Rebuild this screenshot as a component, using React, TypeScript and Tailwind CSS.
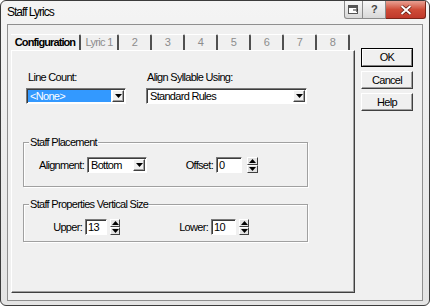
import type { ReactNode } from "react";

const tabs = [
    { label: "Configuration", w: "w-[70px]", active: true },
    { label: "Lyric 1", w: "w-[38px]" },
    { label: "2", w: "w-[33px]" },
    { label: "3", w: "w-[33px]" },
    { label: "4", w: "w-[33px]" },
    { label: "5", w: "w-[33px]" },
    { label: "6", w: "w-[33px]" },
    { label: "7", w: "w-[33px]" },
    { label: "8", w: "w-[33px]" },
];

function Arrow({ up = false }: { up?: boolean }) {
    return (
        <svg width="7" height="4" viewBox="0 0 7 4" className="block">
            <path d={up ? "M0 4 L7 4 L3.5 0 Z" : "M0 0 L7 0 L3.5 4 Z"} fill="#000" />
        </svg>
    );
}

function Combo({ value, className, selected = false }: { value: string; className: string; selected?: boolean }) {
    return (
        <div
            className={`flex h-[16px] border border-t-[#7a7a7a] border-l-[#7a7a7a] border-r-white border-b-white bg-white p-[1px] shadow-[inset_1px_1px_0_#3c3c3c] ${className}`}
        >
            <div
                className={`flex flex-1 items-center pl-[2px] text-[11px] leading-[12px] ${
                    selected ? "mr-[1px] bg-[#3399ff] text-white" : "text-black"
                }`}
            >
                {value}
            </div>
            <div className="flex w-[12px] items-center justify-center border border-t-white border-l-white border-r-[#404040] border-b-[#404040] bg-[#f0f0f0] shadow-[inset_-1px_-1px_0_#a0a0a0]">
                <Arrow />
            </div>
        </div>
    );
}

function Field({ value, className }: { value: string; className: string }) {
    return (
        <div
            className={`flex h-[16px] items-center border border-t-[#7a7a7a] border-l-[#7a7a7a] border-r-white border-b-white bg-white pl-[2px] text-[11px] leading-[12px] shadow-[inset_1px_1px_0_#3c3c3c] ${className}`}
        >
            {value}
        </div>
    );
}

function Spin({ className }: { className: string }) {
    return (
        <div className={`flex h-[16px] flex-col ${className}`}>
            <div className="flex flex-1 items-center justify-center border border-t-white border-l-white border-r-[#404040] border-b-[#404040] bg-[#e3e3e3]">
                <Arrow up />
            </div>
            <div className="flex flex-1 items-center justify-center border border-t-white border-l-white border-r-[#404040] border-b-[#404040] bg-[#e3e3e3]">
                <Arrow />
            </div>
        </div>
    );
}

function Group({ title, className, children }: { title: string; className: string; children: ReactNode }) {
    return (
        <fieldset
            className={`ml-[11px] w-[285px] border border-[#a0a0a0] shadow-[1px_1px_0_#fff,inset_1px_1px_0_#fff] ${className}`}
        >
            <legend className="ml-[5px] bg-[#f0f0f0] px-[1px] text-[11px] leading-[13px]">{title}</legend>
            {children}
        </fieldset>
    );
}

function Button({ label, isDefault = false }: { label: string; isDefault?: boolean }) {
    if (isDefault) {
        return (
            <div className="h-[19px] w-[52px] border border-black">
                <div className="flex h-full items-center justify-center border border-t-white border-l-white border-r-[#808080] border-b-[#808080] bg-[#f0f0f0] text-[11px]">
                    {label}
                </div>
            </div>
        );
    }
    return (
        <div className="flex h-[18px] w-[52px] items-center justify-center border border-t-white border-l-white border-r-[#404040] border-b-[#404040] bg-[#f0f0f0] text-[11px] shadow-[inset_-1px_-1px_0_#a0a0a0]">
            {label}
        </div>
    );
}

export default function App() {
    return (
        <div className="flex h-[306px] w-[430px] flex-col overflow-hidden rounded-[6px] border border-[#3c3c3c] bg-gradient-to-b from-[#f4f4f4] to-[#e4e4e4] font-['Liberation_Sans',Arial,sans-serif] tracking-[-0.7px] text-black">
            {/* title bar */}
            <div className="flex h-[22px] shrink-0 items-start">
                <div className="pl-[6px] pt-[4px] text-[12px] leading-[15px] tracking-[-1px]">Staff Lyrics</div>
                <div className="ml-auto mr-[3px] flex">
                    <div className="flex h-[18px] w-[19px] items-center justify-center rounded-bl-[3px] border border-t-0 border-[#8a8a8a] bg-gradient-to-b from-[#f7f7f7] to-[#d8d8d8]">
                        <svg width="11" height="9" viewBox="0 0 11 9">
                            <rect x="0.5" y="0.5" width="9" height="8" fill="#fff" stroke="#555" />
                            <rect x="1" y="1" width="8" height="2" fill="#555" />
                            <path d="M5 5 H10 M8 3.5 L10 5 L8 6.5" stroke="#333" fill="none" />
                        </svg>
                    </div>
                    <div className="flex h-[18px] w-[23px] items-center justify-center border border-t-0 border-l-0 border-[#8a8a8a] bg-gradient-to-b from-[#f7f7f7] to-[#d8d8d8] text-[11px] font-bold leading-none text-[#444]">
                        ?
                    </div>
                    <div className="flex h-[18px] w-[40px] items-center justify-center rounded-br-[3px] border border-t-0 border-l-0 border-[#7a2418] bg-gradient-to-b from-[#e8a093] via-[#cf4c38] to-[#c0392b]">
                        <svg width="12" height="10" viewBox="0 0 12 10">
                            <path d="M1.5 1 L10.5 9 M10.5 1 L1.5 9" stroke="#5a1a10" strokeWidth="3.4" />
                            <path d="M1.5 1 L10.5 9 M10.5 1 L1.5 9" stroke="#fff" strokeWidth="2" />
                        </svg>
                    </div>
                </div>
            </div>

            {/* client area */}
            <div className="mx-[6px] mt-[1px] flex h-[277px] shrink-0 border border-[#8f8f8f] bg-[#f0f0f0] text-[11px]">
                <div className="ml-[3px] mt-[9px] flex w-[344px] flex-col">
                    <div className="flex h-[16px] items-stretch">
                        {tabs.map((t) => (
                            <div
                                key={t.label}
                                className={`flex items-center justify-center rounded-tr-[2px] border-t border-t-white border-r-2 border-r-[#505050] ${t.w} ${
                                    t.active ? "font-bold tracking-[-0.9px] text-black" : "text-[#8c8c8c]"
                                }`}
                            >
                                {t.label}
                            </div>
                        ))}
                    </div>
                    <div className="flex h-[243px] flex-col border border-t-white border-l-white border-r-[#404040] border-b-[#404040] shadow-[inset_-1px_-1px_0_#a0a0a0]">
                        <div className="mt-[20px] flex h-[13px] items-center leading-[13px]">
                            <span className="ml-[16px] w-[119px]">Line Count:</span>
                            <span>Align Syllable Using:</span>
                        </div>
                        <div className="mt-[4px] flex pl-[14px]">
                            <Combo value="<None>" selected className="w-[100px]" />
                            <Combo value="Standard Rules" className="ml-[20px] w-[161px]" />
                        </div>

                        <Group title="Staff Placement" className="mt-[32px] h-[51px]">
                            <div className="mt-[8px] flex items-center">
                                <span className="w-[63px] pr-[3px] text-right">Alignment:</span>
                                <Combo value="Bottom" className="w-[60px]" />
                                <span className="w-[69px] pr-[3px] text-right">Offset:</span>
                                <Field value="0" className="w-[26px]" />
                                <Spin className="ml-[5px] w-[11px]" />
                            </div>
                        </Group>

                        <Group title="Staff Properties Vertical Size" className="mt-[11px] h-[44px]">
                            <div className="mt-[8px] flex items-center">
                                <span className="w-[61px] pr-[3px] text-right">Upper:</span>
                                <Field value="13" className="w-[22px]" />
                                <Spin className="ml-[3px] w-[10px]" />
                                <span className="w-[91px] pr-[3px] text-right">Lower:</span>
                                <Field value="10" className="w-[25px]" />
                                <Spin className="ml-[3px] w-[10px]" />
                            </div>
                        </Group>
                    </div>
                </div>

                <div className="ml-[6px] mt-[23px] flex flex-col gap-[4px]">
                    <Button label="OK" isDefault />
                    <Button label="Cancel" />
                    <Button label="Help" />
                </div>
            </div>
        </div>
    );
}
